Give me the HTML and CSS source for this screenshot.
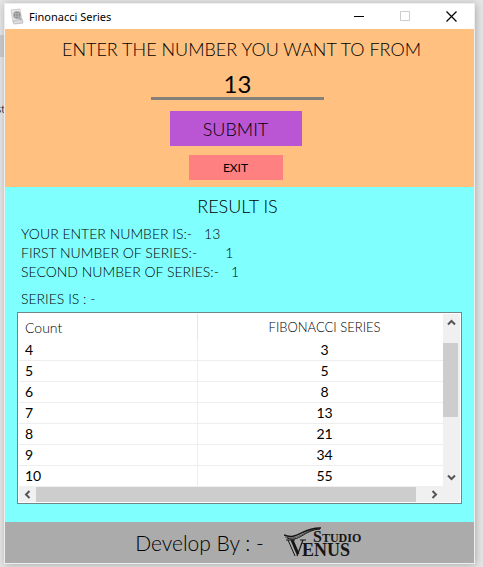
FILE: index.html
```html
<!DOCTYPE html>
<html lang="en">
<head>
<meta charset="utf-8">
<meta name="viewport" content="width=device-width, initial-scale=1">
<title>Finonacci Series</title>
<link rel="stylesheet" href="styles.css">
</head>
<body>
<div class="behind" aria-hidden="true"><span class="behind-tab"></span><span class="behind-text">st</span></div>
<main class="window">
  <header class="titlebar">
    <svg class="app-icon" width="16" height="18" viewBox="0 0 16 18" aria-hidden="true">
      <path d="M1 2 10 1l2 12-9 1z" fill="#e6e6e6" stroke="#cfcfcf"/>
      <path d="M3 13 12 11l1 4-9 1z" fill="#dcdcdc" stroke="#c2c2c2"/>
      <circle cx="7" cy="7" r="3" fill="#ccc" stroke="#999" stroke-width="1.500"/>
      <path d="M7 4v6M4 7h6" stroke="#888"/>
      <path d="m9 9 2 3" stroke="#aaa" stroke-width="2"/>
    </svg>
    <h1 class="title">Finonacci Series</h1>
    <div class="controls">
      <button class="control" type="button" aria-label="Minimize"><svg width="11" height="11" viewBox="0 0 11 11"><path d="M0 5.5h10" stroke="#000"/></svg></button>
      <button class="control" type="button" aria-label="Maximize" disabled><svg width="11" height="11" viewBox="0 0 11 11"><path d="M.5.5h9v9h-9z" fill="none" stroke="#ccc"/></svg></button>
      <button class="control" type="button" aria-label="Close"><svg width="11" height="11" viewBox="0 0 11 11"><path d="m.5.5 10 10m0-10-10 10" stroke="#000" stroke-width="1.200"/></svg></button>
    </div>
  </header>

  <form class="entry">
    <label class="entry-label" for="limit">ENTER THE NUMBER YOU WANT TO FROM</label>
    <input class="entry-input" id="limit" type="text" value="13">
    <button class="submit" type="button">SUBMIT</button>
    <button class="exit" type="button">EXIT</button>
  </form>

  <section class="result">
    <h2 class="result-title">RESULT IS</h2>
    <dl class="facts">
      <div class="fact"><dt>YOUR ENTER NUMBER IS:-</dt><dd>13</dd></div>
      <div class="fact fact-wide"><dt>FIRST NUMBER OF SERIES:-</dt><dd>1</dd></div>
      <div class="fact"><dt>SECOND NUMBER OF SERIES:-</dt><dd>1</dd></div>
    </dl>
    <p class="series-label">SERIES IS : -</p>
    <div class="grid">
      <table class="series">
        <thead><tr><th class="count">Count</th><th>FIBONACCI SERIES</th></tr></thead>
        <tbody>
          <tr><td>4</td><td>3</td></tr>
          <tr><td>5</td><td>5</td></tr>
          <tr><td>6</td><td>8</td></tr>
          <tr><td>7</td><td>13</td></tr>
          <tr><td>8</td><td>21</td></tr>
          <tr><td>9</td><td>34</td></tr>
          <tr><td>10</td><td>55</td></tr>
        </tbody>
      </table>
      <div class="vbar">
        <button class="arrow" type="button" aria-label="Scroll up"><svg width="9" height="7" viewBox="0 0 9 7"><path d="m1 5.500 3.500-3.500 3.500 3.500" fill="none" stroke="#555" stroke-width="2"/></svg></button>
        <div class="vtrack"><div class="vthumb"></div></div>
        <button class="arrow" type="button" aria-label="Scroll down"><svg width="9" height="7" viewBox="0 0 9 7"><path d="m1 1.500 3.500 3.500 3.500-3.500" fill="none" stroke="#555" stroke-width="2"/></svg></button>
      </div>
      <div class="hbar">
        <button class="arrow" type="button" aria-label="Scroll left"><svg width="7" height="9" viewBox="0 0 7 9"><path d="M5.500 1 2 4.500 5.500 8" fill="none" stroke="#555" stroke-width="2"/></svg></button>
        <div class="hthumb"></div>
        <button class="arrow" type="button" aria-label="Scroll right"><svg width="7" height="9" viewBox="0 0 7 9"><path d="M1.500 1 5 4.500 1.500 8" fill="none" stroke="#555" stroke-width="2"/></svg></button>
      </div>
    </div>
  </section>

  <footer class="footer">
    <span class="credit">Develop By : -</span>
    <svg class="logo" width="84" height="32" viewBox="0 0 84 32" role="img" aria-label="Studio Venus">
      <g fill="none" stroke="#151515">
        <path d="M0 8C13 14 19 0 37 1" stroke-width="1.500"/>
        <path d="M3 11C15 16 20 3 36 2" stroke-width="1"/>
        <path d="M1 10C14 15 20 2 36 2" stroke-width=".6"/>
        <path d="M2 13h9M4 13l7 16" stroke-width="1"/>
        <path d="m8 13 6 14" stroke-width="3"/>
        <path d="M13 29 19 13M16 13h6" stroke-width="1.200"/>
      </g>
      <g fill="#151515" class="logo-text">
        <text x="29" y="15" font-size="12"><tspan font-size="16">S</tspan>TUDIO</text>
        <text x="18" y="29" font-size="18">ENUS</text>
      </g>
    </svg>
  </footer>
</main>
</body>
</html>
```
FILE: styles.css
```css
* { box-sizing: border-box; }
body {
  margin: 0;
  min-height: 100vh;
  padding: 4px 9px 5px 5px;
  display: flex;
  background: #e6e6e6;
  color: #000;
  font-family: Lato, "Liberation Sans", sans-serif;
  font-weight: 300;
  overflow: hidden;
}
h1, h2, p, dl, dd { margin: 0; font-weight: inherit; }
button { border: 0; padding: 0; font: inherit; color: inherit; }

.behind { position: absolute; top: 35px; left: 0; width: 5px; overflow: hidden; }
.behind-tab { display: block; height: 22px; background: #c8c8c8; }
.behind-text { display: block; margin-top: 44px; margin-left: -4px; font: 11px/16px "Open Sans", sans-serif; }

.window {
  position: relative;
  flex: 1;
  display: flex;
  flex-direction: column;
  box-shadow: 0 0 0 1px #eee, 1px 1px 8px 1px #aaa;
}
.titlebar { display: flex; align-items: center; height: 25px; padding-left: 5px; background: #fff; }
.title { flex: 1; margin-left: 3px; font: 400 11px/16px "Noto Sans", sans-serif; }
.controls { display: flex; align-self: stretch; }
.control { width: 46px; background: none; display: grid; place-items: center; }

.entry {
  display: flex;
  flex-direction: column;
  align-items: center;
  height: 158px;
  padding: 8px 4px 0 0;
  background: #ffc080;
}
.entry-label { font-size: 18px; line-height: 24px; margin-left: 8px; white-space: nowrap; }
.entry-input {
  width: 37%;
  height: 31px;
  margin: 8px 0 11px;
  padding: 0;
  border: 0;
  border-bottom: 3px solid #85807a;
  border-radius: 0;
  background: none;
  color: #000;
  font: 400 24px/28px Lato, sans-serif;
  text-align: center;
}
.submit { width: 132px; height: 35px; margin-right: 4px; background: #ba55d3; font-size: 18px; }
.exit { width: 94px; height: 25px; margin: 9px 4px 0 0; background: #ff8080; font-size: 12px; font-weight: 400; }

.result { flex: 1; padding: 7px 12px 18px; background: #80ffff; }
.result-title { font-size: 18px; line-height: 24px; text-align: center; padding-right: 4px; }
.facts { margin: 6px 4px 8px; font-size: 14px; line-height: 19px; }
.fact { display: flex; gap: 12px; }
.fact-wide { gap: 28px; }
.series-label { margin: 0 4px 4px; font-size: 14px; line-height: 19px; }

.grid {
  display: grid;
  grid-template-columns: 1fr 17px;
  padding: 1px;
  border: 1px solid #70868c;
  background: #fff;
}
.series { width: 100%; border-collapse: separate; border-spacing: 0; table-layout: fixed; font-size: 14px; font-weight: 400; }
.series th { height: 26px; padding: 0 0 0 8px; font-weight: 300; border-left: 1px solid #e5e5e5; font-size: 13px; }
.series td { height: 21px; padding: 0 0 0 8px; line-height: 20px; text-align: center; border-bottom: 1px solid #eee; border-left: 1px solid #eee; }
.series .count { width: 42%; font-size: 14px; }
.series tr > :first-child { text-align: left; padding-left: 6px; border-left: 0; }
.series tr:last-child td { height: 20px; border-bottom: 0; }

.arrow { display: grid; place-items: center; width: 17px; height: 17px; background: none; flex: none; }
.vbar { display: flex; flex-direction: column; background: #f0f0f0; }
.vtrack { flex: 1; padding-top: 12px; }
.vthumb { width: 15px; height: 59%; background: #cdcdcd; }
.hbar { grid-column: 1 / -1; display: flex; align-items: center; height: 16px; padding-right: 17px; background: #f0f0f0; }
.hthumb { flex: 1; height: 15px; margin-right: 10px; background: #cdcdcd; }

.footer { display: flex; align-items: center; justify-content: center; gap: 20px; height: 41px; padding-left: 24px; background: #ababab; }
.credit { font-size: 21px; white-space: nowrap; }
.logo-text { font-family: "Liberation Serif", serif; font-weight: 700; }
```
